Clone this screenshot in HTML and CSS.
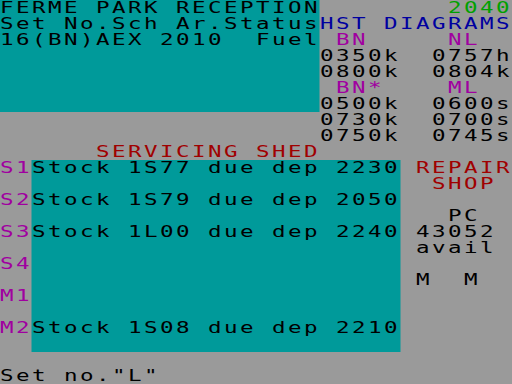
FILE: index.html
```html
<!DOCTYPE html>
<html>
<head>
<meta charset="utf-8">
<link rel="stylesheet" href="styles.css">
</head>
<body>
<div class="screen">
<div class="row"><span class="cy">FERME PARK RECEPTION</span>        <span class="g">2040</span></div>
<div class="row"><span class="cy">Set No.Sch Ar.Status</span><span class="b">HST DIAGRAMS</span></div>
<div class="row"><span class="cy">16(BN)AEX 2010  Fuel</span> <span class="m">BN</span>     <span class="m">NL</span></div>
<div class="row"><span class="cy">                    </span>0350k  0757h</div>
<div class="row"><span class="cy">                    </span>0800k  0804k</div>
<div class="row"><span class="cy">                    </span> <span class="m">BN*</span>    <span class="m">ML</span></div>
<div class="row"><span class="cy">                    </span>0500k  0600s</div>
<div class="row">                    0730k  0700s</div>
<div class="row">                    0750k  0745s</div>
<div class="row">      <span class="r">SERVICING SHED</span></div>
<div class="row"><span class="m">S1</span><span class="cy">Stock 1S77 due dep 2230</span> <span class="r">REPAIR</span></div>
<div class="row">  <span class="cy">                       </span>  <span class="r">SHOP</span></div>
<div class="row"><span class="m">S2</span><span class="cy">Stock 1S79 due dep 2050</span></div>
<div class="row">  <span class="cy">                       </span>   PC</div>
<div class="row"><span class="m">S3</span><span class="cy">Stock 1L00 due dep 2240</span> 43052</div>
<div class="row">  <span class="cy">                       </span> avail</div>
<div class="row"><span class="m">S4</span><span class="cy">                       </span></div>
<div class="row">  <span class="cy">                       </span> M  M</div>
<div class="row"><span class="m">M1</span><span class="cy">                       </span></div>
<div class="row">  <span class="cy">                       </span></div>
<div class="row"><span class="m">M2</span><span class="cy">Stock 1S08 due dep 2210</span></div>
<div class="row">  <span class="cy">                       </span></div>
<div class="row"> </div>
<div class="row">Set no."L"</div>
</div>
</body>
</html>
```
FILE: styles.css
```css
html, body {
  margin: 0;
  padding: 0;
  background: #9a9a9a;
  overflow: hidden;
}
.screen {
  width: 341.33px;
  height: 384px;
  transform: scaleX(1.5);
  transform-origin: 0 0;
  font-family: "DejaVu Sans Mono", monospace;
  font-size: 15px;
  line-height: 17.5px;
  letter-spacing: 1.636px;
  color: #000;
}
.row {
  height: 16px;
  white-space: pre;
}
.cy {
  display: inline-block;
  height: 16px;
  vertical-align: top;
  background: #009a9a;
}
.g { color: #00a000; }
.b { color: #0000a0; }
.m { color: #a000a0; }
.r { color: #a00000; }
```
